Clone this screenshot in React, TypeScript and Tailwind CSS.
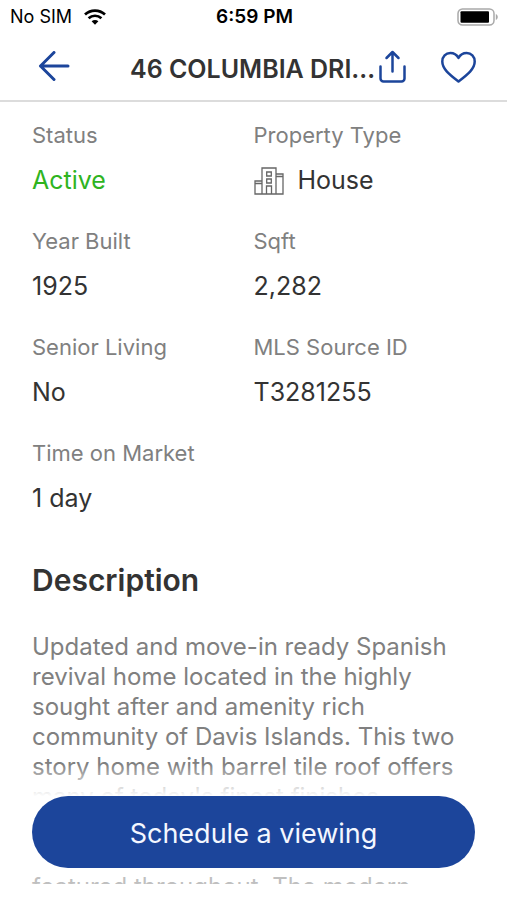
import type { ReactNode } from 'react';

const DESCRIPTION =
  "Updated and move-in ready Spanish revival home located in the highly sought after and amenity rich community of Davis Islands. This two story home with barrel tile roof offers many of today's finest finishes complete with designer lighting, hardwood floors and custom cabinetry featured throughout. The modern";

function WifiIcon() {
  return (
    <svg viewBox="0 0 22 16" className="h-4 w-[22px]" fill="none" stroke="black" strokeWidth="2.7" aria-hidden="true">
      <path d="M1 5.6C6.6.3 15.4.3 21 5.6" />
      <path d="M4.6 9.3c3.7-3.4 9.1-3.4 12.8 0" />
      <path d="M7.6 12.2c2-1.7 4.8-1.7 6.8 0L11 15.8z" fill="black" stroke="none" />
    </svg>
  );
}

function BatteryIcon() {
  return (
    <svg viewBox="0 0 42 18" className="h-[18px] w-[42px]" fill="none" aria-hidden="true">
      <rect x="1" y="1" width="36" height="16" rx="4.5" stroke="#a9a9a9" strokeWidth="1.5" />
      <rect x="3.5" y="3.2" width="28.5" height="11.6" rx="1" fill="black" />
      <path d="M38.8 6v6c2.6-1 2.6-5 0-6z" fill="#a9a9a9" />
    </svg>
  );
}

function BackIcon() {
  return (
    <svg viewBox="0 0 32 32" className="size-8" fill="none" stroke="#1c459b" strokeWidth="3" strokeLinecap="round" strokeLinejoin="round" aria-hidden="true">
      <path d="M30 15H2.5M16 1.5 2.5 15 16 28.5" />
    </svg>
  );
}

function ShareIcon() {
  return (
    <svg viewBox="0 0 28 34" className="h-[34px] w-7" fill="none" stroke="#1c459b" strokeWidth="2.5" strokeLinecap="round" strokeLinejoin="round" aria-hidden="true">
      <path d="M1.500 16.5v12a3 3 0 0 0 3 3h18a3 3 0 0 0 3-3v-12" />
      <path d="M13.500 21.5V2M7.500 8l6-6 6 6" />
    </svg>
  );
}

function HeartIcon() {
  return (
    <svg viewBox="0 0 36 32" className="h-8 w-9" fill="none" stroke="#1c459b" strokeWidth="2.5" strokeLinejoin="round" aria-hidden="true">
      <path d="M17.500 30.5C8.500 23.5 1.300 18 1.300 10.5c0-5 3.500-8.500 8-8.500 3.400 0 6.400 1.600 8.200 4.900C19.300 3.600 22.300 2 25.700 2c4.500 0 8 3.500 8 8.500 0 7.500-7.200 13-16.200 20z" />
    </svg>
  );
}

function BuildingIcon() {
  return (
    <svg viewBox="0 0 30 28" className="h-7 w-[30px]" fill="none" stroke="#666" strokeWidth="1.3" aria-hidden="true">
      <path d="M8 27V1h14v26M8 14H1v13h28V7h-7M1 16.5h7M22 9.5h7" />
      <path d="M12.7 5h4.6v4h-4.6zM12.7 12h4.6v4h-4.6zM12.5 27v-8h5v8" />
    </svg>
  );
}

function Detail({ label, children, tone = 'text-[#333]' }: { label: string; children: ReactNode; tone?: string }) {
  return (
    <div>
      <dt className="text-[22px] leading-[26px] text-[#808080]">{label}</dt>
      <dd className={`mt-[18px] flex h-[30px] items-center gap-3.5 text-[25px] ${tone}`}>{children}</dd>
    </div>
  );
}

export default function App() {
  return (
    <div className="flex h-screen flex-col bg-white pb-4 font-['Inter',sans-serif]">
      <div className="grid h-[34px] shrink-0 grid-cols-3 items-center pr-2 pl-2.5 text-lg text-black">
        <div className="flex items-center gap-3">
          No SIM
          <WifiIcon />
        </div>
        <div className="text-center text-[19px] font-semibold">6:59 PM</div>
        <div className="flex justify-end">
          <BatteryIcon />
        </div>
      </div>

      <header className="flex h-[68px] shrink-0 items-center border-b-2 border-[#dcdcdc] pr-[30px] pl-[38px]">
        <button type="button" aria-label="Back">
          <BackIcon />
        </button>
        <h1 className="ml-[60px] min-w-0 flex-1 truncate pt-1.5 text-[25px] font-semibold text-[#333]">
          46 COLUMBIA DRIVE, Tampa
        </h1>
        <button type="button" aria-label="Share">
          <ShareIcon />
        </button>
        <button type="button" aria-label="Save" className="ml-[34px]">
          <HeartIcon />
        </button>
      </header>

      <div className="relative min-h-0 flex-1">
        <main className="h-full overflow-hidden px-8 pt-5">
          <dl className="grid grid-cols-2 gap-y-8">
            <Detail label="Status" tone="text-[#2fb41f]">Active</Detail>
            <Detail label="Property Type">
              <BuildingIcon />
              House
            </Detail>
            <Detail label="Year Built">1925</Detail>
            <Detail label="Sqft">2,282</Detail>
            <Detail label="Senior Living">No</Detail>
            <Detail label="MLS Source ID">T3281255</Detail>
            <Detail label="Time on Market">1 day</Detail>
          </dl>
          <h2 className="mt-12 text-[30px] leading-9 font-semibold text-[#333]">Description</h2>
          <p className="mt-[34px] text-2xl leading-[30px] text-[#808080]">{DESCRIPTION}</p>
        </main>

        <div className="absolute inset-x-0 bottom-0 bg-[linear-gradient(to_bottom,transparent,white_27%,white_90%,rgba(255,255,255,0.5)_92%)] px-8 pt-8 pb-4">
          <button type="button" className="h-[72px] w-full rounded-full bg-[#1c459b] pt-1 text-[27px] text-[#f4f7ff]">
            Schedule a viewing
          </button>
        </div>
      </div>
    </div>
  );
}
